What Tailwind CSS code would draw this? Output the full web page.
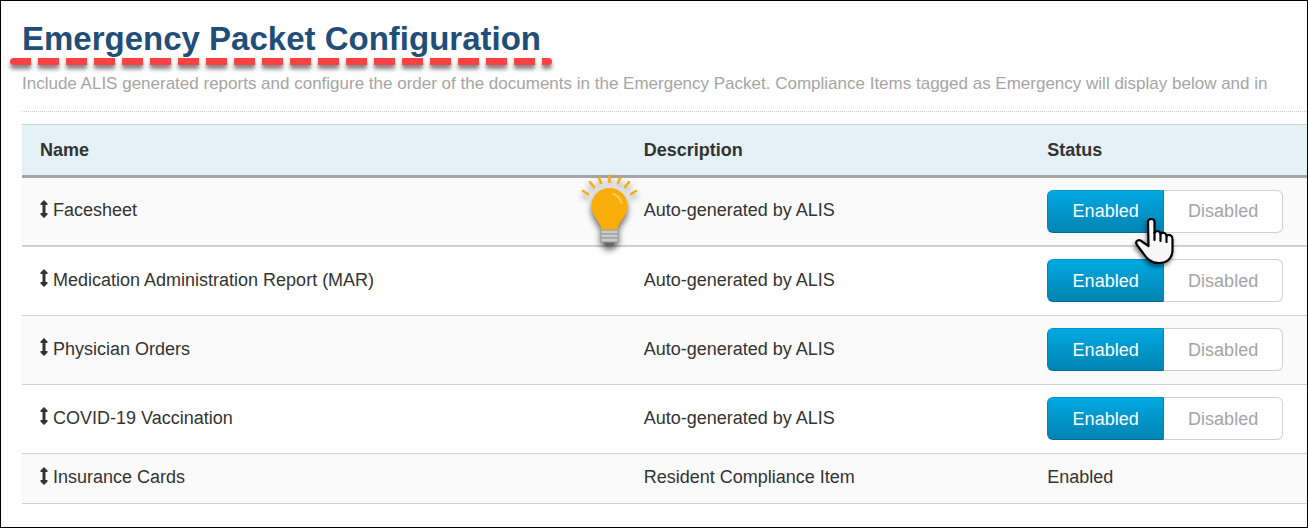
<!DOCTYPE html>
<html lang="en">
<head>
  <meta charset="UTF-8" />
  <meta name="viewport" content="width=device-width, initial-scale=1.0" />
  <title>Emergency Packet Configuration</title>
  <script src="https://cdn.jsdelivr.net/npm/@tailwindcss/browser@4"></script>
</head>
<body class="bg-white font-['Liberation_Sans',Arial,sans-serif] text-lg text-[#333]">

  <svg class="hidden">
    <symbol id="arrows" viewBox="0 0 8 18">
      <path d="M4 0 L7.500 3.500 V5 H5.500 V13 H7.500 V14.500 L4 18 L0.500 14.500 V13 H2.500 V5 H0.500 V3.500 Z" fill="#333" />
    </symbol>
  </svg>

  <main class="relative min-h-screen overflow-hidden border border-black pl-[21px] pt-4">
    <h1 class="text-[33px] leading-11 font-bold text-[#1f4e79]">Emergency Packet Configuration</h1>

    <!-- Dashed underline under the title -->
    <svg class="absolute left-1 top-[52px] h-6 w-[556px]" viewBox="0 0 556 24" aria-hidden="true">
      <defs>
        <clipPath id="pill"><rect x="5" y="5" width="542" height="7" rx="3.5" /></clipPath>
      </defs>
      <g class="drop-shadow-[0_4px_2px_rgb(0_0_0/0.5)]">
        <g clip-path="url(#pill)">
          <path d="M5 8.5 H547" stroke="#ff4141" stroke-width="7" stroke-dasharray="21 7" />
        </g>
      </g>
    </svg>

    <p class="mt-2 whitespace-nowrap border-b border-dotted border-[#ccc] pb-3 text-[17px] leading-[30px] text-[#a5a5a5]">Include ALIS generated reports and configure the order of the documents in the Emergency Packet. Compliance Items tagged as Emergency will display below and in</p>

    <table class="mt-3 w-full table-fixed border-separate border-spacing-0 border-t border-[#d0d0d0] text-left">
      <thead>
        <tr class="h-[53px] bg-[#e4f1f6]">
          <th class="w-[46.9%] border-b-3 border-[#a5a5a5] pl-[18px]">Name</th>
          <th class="w-[31.4%] border-b-3 border-[#a5a5a5] pl-[19px]">Description</th>
          <th class="border-b-3 border-[#a5a5a5] pl-[19px]">Status</th>
        </tr>
      </thead>
      <tbody id="packet-items"></tbody>
    </table>

    <!-- Light bulb -->
    <svg class="absolute left-[575px] top-[170px] h-20 w-16 drop-shadow-[0_4px_3px_rgb(0_0_0/0.6)]" viewBox="0 0 64 80" aria-hidden="true">
      <g stroke="#f9ad0a" stroke-width="2.500" stroke-linecap="round">
        <path d="M7 20 L12 23 M14 11 L18 16 M23 7 L25 12 M33.500 5 V11 M44 7 L42 12 M53 11 L49 16 M60 20 L55 23" />
      </g>
      <path d="M33.500 17 C23 17 15.500 25 15.500 35 C15.500 47 25 49 25.500 60 H41.500 C42 49 51.500 47 51.500 35 C51.500 25 44 17 33.500 17 Z" fill="#f9ad0a" />
      <path d="M36.500 22.500 C42 24 45 28 46 33 C43 27 41 25 36.500 22.500 Z" fill="#fbd57d" stroke="#fbd57d" />
      <path d="M28 70 H39 L37 75 H30 Z" fill="#666" />
      <g fill="#c9c9c9" stroke="#999">
        <rect x="24.500" y="59" width="18" height="4" rx="2" />
        <rect x="24.500" y="63" width="18" height="4" rx="2" />
        <rect x="24.500" y="67" width="18" height="4" rx="2" />
      </g>
    </svg>

    <!-- Hand pointer -->
    <svg class="absolute left-[1129px] top-[212px] h-14 w-12 drop-shadow-[-1px_3px_2px_rgb(0_0_0/0.5)]" viewBox="0 0 48 56" aria-hidden="true">
      <path d="M18 9 C18 5 24.500 5 24.500 9 V20 C26 17 30.500 18 30.500 21 C32.500 18.500 36.500 20 36.500 23 C39 20.500 42.500 22.500 42.500 26 V37 C42.500 45 37 50 29 50 C21 50 17 46 13 40 L7 32 C4.500 28 9 25.500 12 28.500 L18.500 33 Z" fill="#f7f7f7" stroke="#000" stroke-width="2.200" stroke-linejoin="round" />
      <path d="M24.500 19 V27 M30.500 21 V28 M36.500 23 V29" fill="none" stroke="#000" stroke-width="2.200" stroke-linecap="round" />
    </svg>
  </main>

  <script>
    const items = [
      { name: 'Facesheet', description: 'Auto-generated by ALIS', toggle: true },
      { name: 'Medication Administration Report (MAR)', description: 'Auto-generated by ALIS', toggle: true },
      { name: 'Physician Orders', description: 'Auto-generated by ALIS', toggle: true },
      { name: 'COVID-19 Vaccination', description: 'Auto-generated by ALIS', toggle: true },
      { name: 'Insurance Cards', description: 'Resident Compliance Item', toggle: false },
    ];

    const toggle = `
      <div class="flex h-[43px]" role="group" aria-label="Status">
        <button type="button" aria-pressed="true" class="w-[117px] rounded-l-md border border-t-[#0094c8] border-x-[#0086b6] border-b-[#006a90] bg-linear-to-b from-[#00a9e2] to-[#0284b2] text-white">Enabled</button>
        <button type="button" aria-pressed="false" class="w-[119px] rounded-r-md border border-l-0 border-[#d0d0d0] bg-white text-[#a5a5a5]">Disabled</button>
      </div>`;

    const tableBody = document.getElementById('packet-items');
    items.forEach((item, i) => {
      const border = i === 0 ? 'border-b-2' : 'border-b';
      tableBody.innerHTML += `
        <tr class="${item.toggle ? 'h-[69px]' : 'h-[50px]'} odd:bg-[#fafafa]">
          <td class="${border} border-[#d0d0d0] pb-[3px] pl-[18px]">
            <div class="flex items-center gap-[5px]">
              <svg class="mb-[3px] h-[18px] w-2" aria-hidden="true"><use href="#arrows" /></svg>
              <span>${item.name}</span>
            </div>
          </td>
          <td class="${border} border-[#d0d0d0] pb-[3px] pl-[19px]">${item.description}</td>
          <td class="${border} border-[#d0d0d0] pl-[19px] ${item.toggle ? 'pb-px' : 'pb-[3px]'}">${item.toggle ? toggle : 'Enabled'}</td>
        </tr>`;
    });
  </script>
</body>
</html>
